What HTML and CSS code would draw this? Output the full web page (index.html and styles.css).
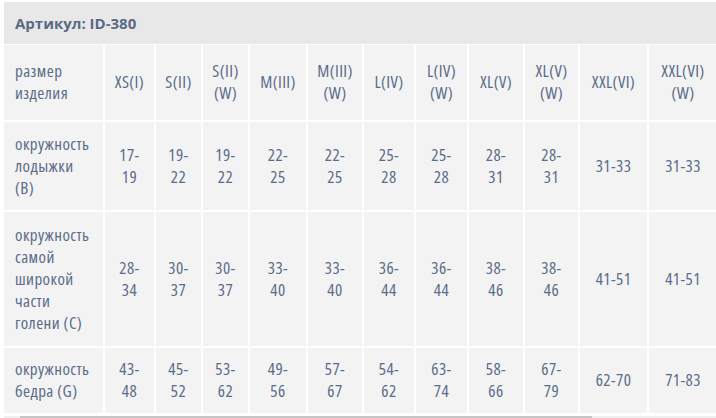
FILE: index.html
```html
<!DOCTYPE html>
<html lang="ru">
<head>
<meta charset="utf-8">
<link rel="stylesheet" href="styles.css">
</head>
<body>
<div class="wrap">
  <div class="title">Артикул: ID-380</div>
  <div class="scroller">
    <table class="sizes">
      <tr class="r-head">
        <td>размер изделия</td>
        <td>XS(I)</td>
        <td>S(II)</td>
        <td>S(II)<br>(W)</td>
        <td>M(III)</td>
        <td>M(III)<br>(W)</td>
        <td>L(IV)</td>
        <td>L(IV)<br>(W)</td>
        <td>XL(V)</td>
        <td>XL(V)<br>(W)</td>
        <td>XXL(VI)</td>
        <td>XXL(VI)<br>(W)</td>
      </tr>
      <tr class="r-b">
        <td>окружность лодыжки (B)</td>
        <td>17-<br>19</td>
        <td>19-<br>22</td>
        <td>19-<br>22</td>
        <td>22-<br>25</td>
        <td>22-<br>25</td>
        <td>25-<br>28</td>
        <td>25-<br>28</td>
        <td>28-<br>31</td>
        <td>28-<br>31</td>
        <td>31-33</td>
        <td>31-33</td>
      </tr>
      <tr class="r-c">
        <td>окружность самой широкой части голени (C)</td>
        <td>28-<br>34</td>
        <td>30-<br>37</td>
        <td>30-<br>37</td>
        <td>33-<br>40</td>
        <td>33-<br>40</td>
        <td>36-<br>44</td>
        <td>36-<br>44</td>
        <td>38-<br>46</td>
        <td>38-<br>46</td>
        <td>41-51</td>
        <td>41-51</td>
      </tr>
      <tr class="r-g">
        <td>окружность бедра (G)</td>
        <td>43-<br>48</td>
        <td>45-<br>52</td>
        <td>53-<br>62</td>
        <td>49-<br>56</td>
        <td>57-<br>67</td>
        <td>54-<br>62</td>
        <td>63-<br>74</td>
        <td>58-<br>66</td>
        <td>67-<br>79</td>
        <td>62-70</td>
        <td>71-83</td>
      </tr>
    </table>
  </div>
  <div class="scrollbar"><div class="thumb"></div></div>
</div>
</body>
</html>
```
FILE: styles.css
```css
html, body {
  margin: 0;
  padding: 0;
  background: #ffffff;
}
body {
  font-family: "Open Sans", "DejaVu Sans", sans-serif;
  font-stretch: 75%;
  font-size: 17px;
  letter-spacing: 0.4px;
  color: #5b6c89;
  overflow: hidden;
}
.wrap {
  padding: 2px 0 0 4px;
  width: 712px;
  overflow: hidden;
}
.title {
  background: #e8e8e8;
  height: 42px;
  line-height: 42px;
  padding-left: 11px;
  font-weight: 700;
  font-size: 15px;
  font-stretch: 90%;
  letter-spacing: 0;
  color: #5a6a85;
  white-space: nowrap;
}
.scroller {
  overflow: hidden;
  width: 714px;
}
.sizes {
  border-collapse: collapse;
  background: #f3f3f3;
  table-layout: fixed;
  width: 714px;
}
.sizes td {
  box-sizing: border-box;
  border: 2px solid #ffffff;
  padding: 0 2px;
  text-align: center;
  vertical-align: middle;
  line-height: 22px;
}
.sizes tr:first-child td { border-top-width: 1px; }
.sizes td:first-child {
  border-left: none;
  text-align: left;
  padding-left: 11px;
  padding-right: 10px;
}
.sizes td:nth-child(1) { width: 100px; }
.sizes td:nth-child(2) { width: 51px; }
.sizes td:nth-child(3) { width: 47px; }
.sizes td:nth-child(4) { width: 47px; }
.sizes td:nth-child(5) { width: 58px; }
.sizes td:nth-child(6) { width: 56px; }
.sizes td:nth-child(7) { width: 52px; }
.sizes td:nth-child(8) { width: 53px; }
.sizes td:nth-child(9) { width: 56px; }
.sizes td:nth-child(10) { width: 55px; }
.sizes td:nth-child(11) { width: 69px; }
.sizes td:nth-child(12) { width: 70px; }
.r-head td { height: 76px; }
.r-b td { height: 90px; }
.r-c td { height: 136px; }
.r-g td { height: 67px; }
.scrollbar {
  height: 3px;
  margin-top: 1px;
  background: #f0f0f0;
  padding-left: 16px;
}
.thumb {
  width: 572px;
  height: 3px;
  background: #c6c6c6;
}
```
